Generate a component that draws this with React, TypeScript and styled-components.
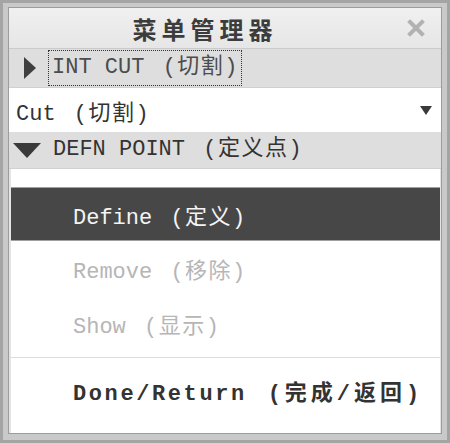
import React from 'react';
import styled, { createGlobalStyle, css } from 'styled-components';

const GlobalStyle = createGlobalStyle`
  html, body {
    margin: 0;
    padding: 0;
    background: #ffffff;
  }
`;

const mono = `"Liberation Mono", "Noto Sans CJK SC", monospace`;

const Frame = styled.div`
  box-sizing: border-box;
  width: 450px;
  height: 443px;
  background: #c9c9c9;
  border: 3px solid #a4a4a4;
  padding: 4px 5px 6px 5px;
  display: flex;
`;

const Panel = styled.div`
  flex: 1;
  display: flex;
  flex-direction: column;
  border: 1px solid #9c9c9c;
  background: #ffffff;
  overflow: hidden;
`;

const TitleBar = styled.div`
  height: 40px;
  flex: none;
  display: flex;
  align-items: center;
  background: linear-gradient(#f0f0f0, #e6e6e6);
  border-bottom: 1px solid #cbcbcb;
  position: relative;
`;

const Title = styled.div`
  flex: 1;
  text-align: center;
  padding-right: 40px;
  font-family: "Noto Sans CJK SC", sans-serif;
  font-weight: 700;
  font-size: 24px;
  letter-spacing: 5px;
  color: #3c3c3c;
`;

const CloseButton = styled.div`
  position: absolute;
  right: 15px;
  top: 10px;
  width: 20px;
  height: 20px;
  display: flex;
  align-items: center;
  justify-content: center;
`;

const HeaderRow = styled.div<{ h: number }>`
  height: ${({ h }) => h}px;
  flex: none;
  display: flex;
  align-items: center;
  background: #dedede;
  border-bottom: 1px solid #d0d0d0;
  box-sizing: border-box;
`;

const Arrow = styled.svg`
  flex: none;
`;

// the Chinese part of a label sits a bit apart and runs a little wider
const Zh = styled.span<{ wide?: boolean }>`
  padding-left: 5px;
  letter-spacing: ${({ wide }) => (wide ? '4px' : '1.5px')};
`;

const HeaderText = styled.span<{ focused?: boolean; dark?: boolean }>`
  font-family: ${mono};
  font-size: 22px;
  line-height: 24px;
  color: ${({ dark }) => (dark ? '#333333' : '#4c4c4c')};
  white-space: pre;
  ${({ focused }) =>
    focused &&
    css`
      border: 1px dotted #333;
      padding: 5px 2px 5px 3px;
    `}
`;

const Select = styled.div`
  height: 44px;
  flex: none;
  display: flex;
  align-items: center;
  justify-content: space-between;
  padding: 0 9px 0 7px;
  background: #ffffff;
  box-sizing: border-box;
`;

const SelectText = styled.span`
  font-family: ${mono};
  font-size: 22px;
  color: #333333;
  white-space: pre;
`;

const List = styled.div`
  flex: 1;
  display: flex;
  flex-direction: column;
  padding-top: 18px;
  border-left: 2px solid #e4e4e4;
  border-right: 1px solid #e4e4e4;
`;

const Item = styled.div<{ active?: boolean; disabled?: boolean; bold?: boolean; h: number }>`
  height: ${({ h }) => h}px;
  flex: none;
  display: flex;
  align-items: center;
  padding-left: 62px;
  font-family: ${mono};
  font-size: 22px;
  letter-spacing: ${({ bold }) => (bold ? '2.6px' : '0')};
  background: ${({ active }) => (active ? '#474747' : 'transparent')};
  color: ${({ active, disabled }) => (active ? '#f4f4f4' : disabled ? '#b6b6b6' : '#333333')};
  font-weight: ${({ bold }) => (bold ? 700 : 400)};
  ${({ active }) =>
    active &&
    css`
      border-top: 1px solid #a0a0a0;
      border-bottom: 1px solid #a0a0a0;
      box-sizing: border-box;
    `}
`;

const ItemLabel = styled.span`
  white-space: pre;
`;

const Divider = styled.div`
  height: 1px;
  flex: none;
  margin-top: 6px;
  background: #dcdcdc;
`;

export default function App() {
  return (
    <>
      <GlobalStyle />
      <Frame>
        <Panel>
          <TitleBar>
            <Title>菜单管理器</Title>
            <CloseButton>
              <svg width="18" height="18" viewBox="0 0 18 18">
                <path d="M3 3 L15 15 M15 3 L3 15" stroke="#b2b2b2" strokeWidth="4" strokeLinecap="square" />
              </svg>
            </CloseButton>
          </TitleBar>
          <HeaderRow h={39}>
            <Arrow width="14" height="24" viewBox="0 0 14 24" style={{ marginLeft: 14, marginRight: 11 }}>
              <path d="M1 1 L13 12 L1 23 Z" fill="#3f3f3f" />
            </Arrow>
            <HeaderText focused>INT CUT <Zh>(切割)</Zh></HeaderText>
          </HeaderRow>
          <Select>
            <SelectText>Cut <Zh>(切割)</Zh></SelectText>
            <svg width="12" height="9" viewBox="0 0 12 9">
              <path d="M0 0 L12 0 L6 9 Z" fill="#3a3a3a" />
            </svg>
          </Select>
          <HeaderRow h={37}>
            <Arrow width="28" height="15" viewBox="0 0 28 15" style={{ marginLeft: 4, marginRight: 12 }}>
              <path d="M0 0 L28 0 L14 15 Z" fill="#3a3a3a" />
            </Arrow>
            <HeaderText dark>DEFN POINT <Zh>(定义点)</Zh></HeaderText>
          </HeaderRow>
          <List>
            <Item active h={54}><ItemLabel>Define <Zh>(定义)</Zh></ItemLabel></Item>
            <Item disabled h={55}><ItemLabel>Remove <Zh>(移除)</Zh></ItemLabel></Item>
            <Item disabled h={55}><ItemLabel>Show <Zh>(显示)</Zh></ItemLabel></Item>
            <Divider />
            <Item bold h={64}><ItemLabel>Done/Return <Zh wide>(完成/返回)</Zh></ItemLabel></Item>
          </List>
        </Panel>
      </Frame>
    </>
  );
}
